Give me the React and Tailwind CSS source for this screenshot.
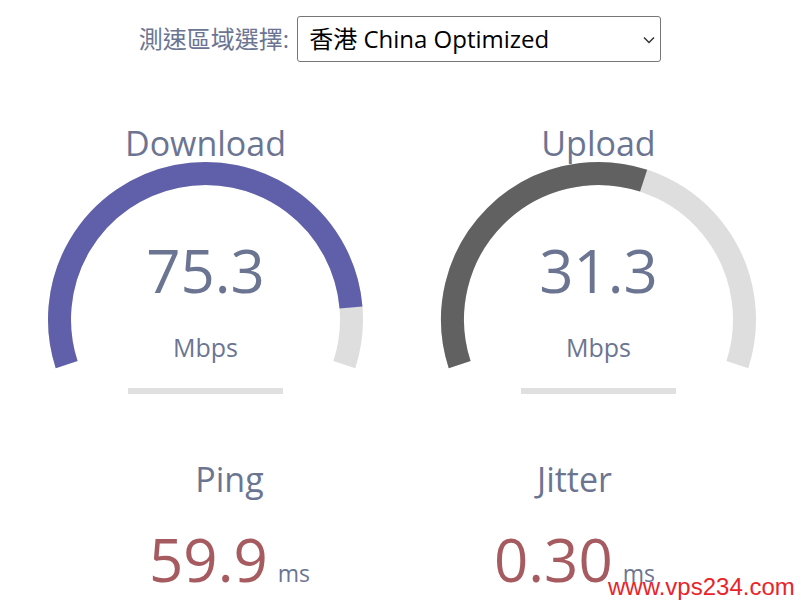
import { useState } from "react";

const FONT = "font-['Open_Sans','Noto_Sans_CJK_TC',sans-serif]";

// canvas-style angles: 0 = right, positive = clockwise (y down)
const pt = (cx, cy, r, deg) => {
  const a = (deg * Math.PI) / 180;
  return [cx + r * Math.cos(a), cy + r * Math.sin(a)];
};

const arcPath = (cx, cy, r, from, to) => {
  const [x0, y0] = pt(cx, cy, r, from);
  const [x1, y1] = pt(cx, cy, r, to);
  const large = to - from > 180 ? 1 : 0;
  return `M ${x0} ${y0} A ${r} ${r} 0 ${large} 1 ${x1} ${y1}`;
};

// meter runs from -1.1π to 0.1π
const START = 162;
const END = 378;

const Gauge = ({ title, value, end, color }) => {
  const cx = 196.5;
  const cy = 156.5;
  const r = 146;

  return (
    <div className="flex w-[393px] flex-col items-center">
      <div className="text-[34px] leading-[40px] text-[#6b7592]">{title}</div>
      <div className="relative h-[225px] w-[393px]">
        <svg width="393" height="225" className="overflow-visible">
          <path d={arcPath(cx, cy, r, START, END)} fill="none" stroke="#dedede" strokeWidth="23" />
          <path d={arcPath(cx, cy, r, START, end)} fill="none" stroke={color} strokeWidth="23" />
        </svg>
        {/* readout sits over the meter */}
        <div className="absolute left-0 right-0 top-[77px] text-center text-[60px] leading-none text-[#6b7592]">
          {value}
        </div>
        <div className="absolute left-0 right-0 top-[172px] text-center text-[25px] leading-none text-[#6b7592]">
          Mbps
        </div>
      </div>
      <div className="h-[6px] w-[155px] bg-[#e0e0e0]" />
    </div>
  );
};

const Stat = ({ title, value }) => (
  <div className="flex w-[345px] flex-col items-center">
    <div className="text-[34px] leading-[40px] text-[#6b7592]">{title}</div>
    <div className="mt-[30px] flex items-baseline">
      <span className="text-[60px] leading-none text-[#a65b60]">{value}</span>
      <span className="ml-[10px] text-[23px] leading-none text-[#6b7592]">ms</span>
    </div>
  </div>
);

export default function App() {
  const [server, setServer] = useState("hk");

  return (
    <div className={`relative h-[608px] w-[800px] overflow-hidden bg-white ${FONT}`}>
      <div className="flex items-center justify-center gap-2 pt-4">
        <span className="text-[24px] text-[#6b7592]">測速區域選擇:</span>
        <div className="relative">
          <select
            value={server}
            onChange={(e) => setServer(e.target.value)}
            className={`h-[46px] w-[364px] appearance-none rounded-[3px] border border-[#767676] bg-white pl-[11px] text-[24px] text-black ${FONT}`}
          >
            <option value="hk">香港 China Optimized</option>
            <option value="tw">台灣 Taipei</option>
            <option value="jp">日本 Tokyo</option>
          </select>
          <svg
            className="pointer-events-none absolute right-[6px] top-[20px]"
            width="12"
            height="8"
            viewBox="0 0 12 8"
          >
            <path d="M1 1.5 L6 6.5 L11 1.5" fill="none" stroke="#333" strokeWidth="1.5" />
          </svg>
        </div>
      </div>

      <div className="ml-[9px] mt-[61px] flex">
        <Gauge title="Download" value="75.3" end={355.3} color="#6060aa" />
        <Gauge title="Upload" value="31.3" end={288} color="#616161" />
      </div>

      <div className="mt-[65px] flex justify-center pl-[4px]">
        <Stat title="Ping" value="59.9" />
        <Stat title="Jitter" value="0.30" />
      </div>

      <div className="absolute left-[608px] top-[575px] font-['Liberation_Sans',Arial,sans-serif] text-[24px] leading-none text-[#e8242b]">
        www.vps234.com
      </div>
    </div>
  );
}
